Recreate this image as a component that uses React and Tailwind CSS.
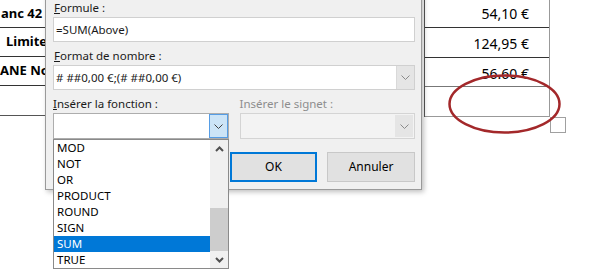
const FUNCS = ['MOD', 'NOT', 'OR', 'PRODUCT', 'ROUND', 'SIGN', 'SUM', 'TRUE'];

function SmallChevron({ color = '#606060' }) {
  return (
    <svg width="9" height="5" viewBox="0 0 9 5">
      <path d="M0.5 0.5 L4.5 4.5 L8.5 0.5" fill="none" stroke={color} strokeWidth="1" />
    </svg>
  );
}

function ScrollArrow({ up }) {
  return (
    <svg width="9" height="6" viewBox="0 0 9 6">
      <path d={up ? 'M1 5 L4.5 1.5 L8 5' : 'M1 1 L4.5 4.5 L8 1'} fill="none" stroke="#505050" strokeWidth="2" />
    </svg>
  );
}

function Label({ children, className = '' }) {
  return <div className={`h-[15px] leading-[15px] text-[11.5px] ${className}`}>{children}</div>;
}

export default function App() {
  return (
    <div className="relative w-[600px] h-[273px] overflow-hidden bg-white" style={{ fontFamily: '"Noto Sans", sans-serif' }}>
      {/* document table behind the dialog */}
      <div className="flex items-start -mt-[2px] text-[14px] text-black">
        <div className="w-[45px] font-bold text-[13px]">
          <div className="h-[30px] border-b border-[#333] flex items-end pb-[4px] pl-[1px] whitespace-nowrap">anc 42</div>
          <div className="h-[29px] border-b border-[#333] flex items-end pb-[5px] pl-[6px] whitespace-nowrap">Limite</div>
          <div className="h-[29px] border-b border-[#333] flex items-end pb-[5px] whitespace-nowrap">ANE No</div>
          <div className="h-[30px] border-b border-[#555]"></div>
        </div>
        <div className="ml-[379px] w-[126px] border-l border-r border-l-[#555] border-r-[#999]">
          <div className="h-[30px] border-b border-[#333] flex items-end justify-end pr-[20px] pb-[3px]">54,10 €</div>
          <div className="h-[30px] border-b border-[#333] flex items-end justify-end pr-[20px] pb-[3px]">124,95 €</div>
          <div className="h-[29px] border-b border-[#777] flex items-end justify-end pr-[20px] pb-[2px]">56.60 €</div>
          <div className="h-[30px] border-b border-[#999]"></div>
        </div>
        <div className="mt-[119px] w-[16px] h-[16px] border border-[#a0a0a0]"></div>
      </div>

      {/* red ellipse annotation */}
      <svg className="absolute left-[447px] top-[73px]" width="115" height="62" viewBox="0 0 115 62">
        <ellipse cx="57.5" cy="31" rx="55" ry="28.5" fill="none" stroke="#a3282a" strokeWidth="2.5" />
      </svg>

      {/* formula dialog */}
      <div className="absolute left-[45px] top-[-20px] w-[377px] h-[210px] bg-[#f0f0f0] border border-[#9a9a9a] shadow-[2px_2px_5px_rgba(0,0,0,0.25)] pt-[19px] pl-[7px] pr-[6px] text-[#1a1a1a]">
        <Label className="pl-[1px]"><span className="underline">F</span>ormule :</Label>
        <div className="mt-[2px] h-[25px] bg-white border border-[#d0d0d0] flex items-center pl-[2px] text-[11.5px]">=SUM(Above)</div>

        <Label className="mt-[6px] pl-[1px]"><span className="underline">F</span>ormat de nombre :</Label>
        <div className="mt-[2px] h-[25px] bg-white border border-[#d0d0d0] flex items-center text-[11.5px]">
          <span className="flex-1 pl-[2px]"># ##0,00 €;(# ##0,00 €)</span>
          <div className="w-[18px] h-full bg-[#e5e5e5] border-l border-[#d9d9d9] flex items-center justify-center">
            <SmallChevron color="#8a8a8a" />
          </div>
        </div>

        <div className="mt-[6px] flex gap-[11px]">
          <Label className="w-[176px]"><span className="underline">I</span>nsérer la fonction :</Label>
          <Label className="w-[176px] text-[#8d8d8d]">Insérer le signet :</Label>
        </div>
        <div className="mt-[2px] flex gap-[11px]">
          <div className="w-[176px] h-[26px] bg-white border border-[#adadad] flex justify-end">
            <div className="w-[19px] h-full bg-[#cce4f7] border border-[#569de5] flex items-center justify-center">
              <SmallChevron color="#404040" />
            </div>
          </div>
          <div className="w-[176px] h-[26px] bg-[#f3f3f3] border border-[#d4d4d4] flex justify-end p-[1px]">
            <div className="w-[18px] h-full bg-[#e5e5e5] flex items-center justify-center">
              <SmallChevron color="#8a8a8a" />
            </div>
          </div>
        </div>

        <div className="mt-[13px] flex justify-end gap-[10px] text-[12px]">
          <button className="w-[87px] h-[30px] bg-[#e1e1e1] border-2 border-[#0078d7] text-black">OK</button>
          <button className="w-[88px] h-[30px] bg-[#e1e1e1] border border-[#c8c8c8] text-black">Annuler</button>
        </div>
      </div>

      {/* open function list */}
      <div className="absolute left-[53px] top-[139px] w-[176px] h-[130px] bg-white border border-[#8a8a8a] flex text-[11.5px] text-black">
        <div className="w-[156px]">
          {FUNCS.map((f) => (
            <div key={f} className={`h-[16px] leading-[16px] pl-[3px] ${f === 'SUM' ? 'bg-[#0078d7] text-white' : ''}`}>{f}</div>
          ))}
        </div>
        <div className="w-[18px] bg-[#f0f0f0] flex flex-col">
          <div className="h-[17px] flex items-center justify-center"><ScrollArrow up /></div>
          <div className="h-[51px]"></div>
          <div className="h-[43px] bg-[#cdcdcd]"></div>
          <div className="h-[17px] flex items-center justify-center"><ScrollArrow /></div>
        </div>
      </div>
    </div>
  );
}
